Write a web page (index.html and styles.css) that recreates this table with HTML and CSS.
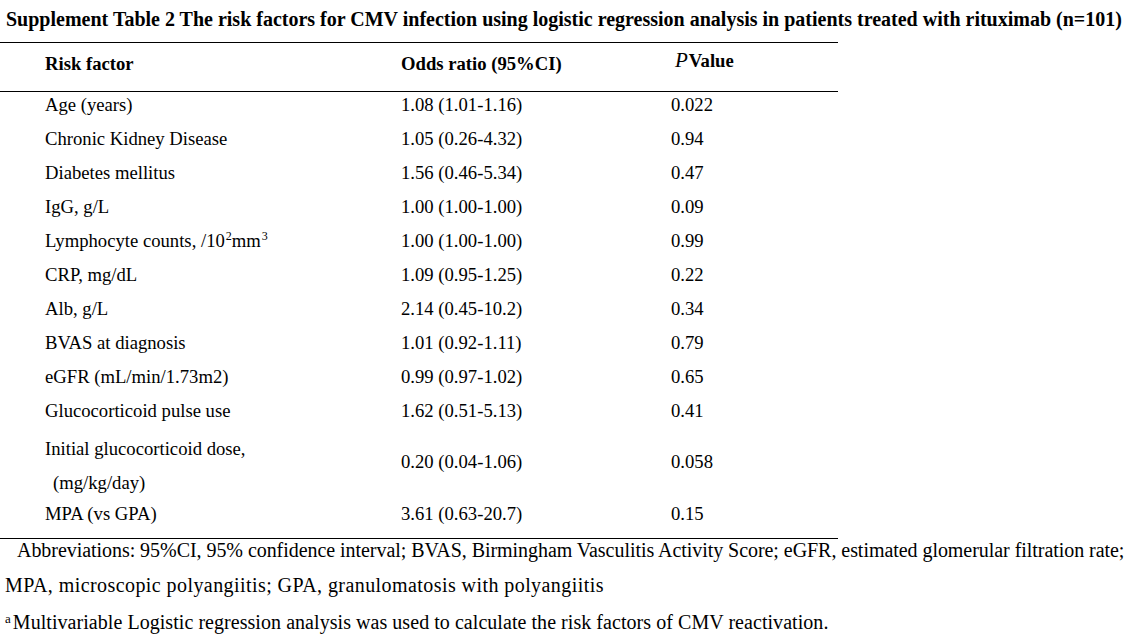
FILE: index.html
```html
<!DOCTYPE html>
<html>
<head>
<meta charset="utf-8">
<link rel="stylesheet" href="styles.css">
</head>
<body>
<h1 class="title">Supplement Table 2 The risk factors for CMV infection using logistic regression analysis in patients treated with rituximab (n=101)</h1>
<table class="tbl">
  <thead>
    <tr class="head">
      <th class="c1">Risk factor</th>
      <th class="c2">Odds ratio (95%CI)</th>
      <th class="c3"><span class="pv"><i class="p">P</i>Value</span></th>
    </tr>
  </thead>
  <tbody>
    <tr><td class="c1">Age (years)</td><td class="c2">1.08 (1.01-1.16)</td><td class="c3">0.022</td></tr>
    <tr><td class="c1">Chronic Kidney Disease</td><td class="c2">1.05 (0.26-4.32)</td><td class="c3">0.94</td></tr>
    <tr><td class="c1">Diabetes mellitus</td><td class="c2">1.56 (0.46-5.34)</td><td class="c3">0.47</td></tr>
    <tr><td class="c1">IgG, g/L</td><td class="c2">1.00 (1.00-1.00)</td><td class="c3">0.09</td></tr>
    <tr><td class="c1">Lymphocyte counts, /10<sup class="sup">2</sup>mm<sup class="sup">3</sup></td><td class="c2">1.00 (1.00-1.00)</td><td class="c3">0.99</td></tr>
    <tr><td class="c1">CRP, mg/dL</td><td class="c2">1.09 (0.95-1.25)</td><td class="c3">0.22</td></tr>
    <tr><td class="c1">Alb, g/L</td><td class="c2">2.14 (0.45-10.2)</td><td class="c3">0.34</td></tr>
    <tr><td class="c1">BVAS at diagnosis</td><td class="c2">1.01 (0.92-1.11)</td><td class="c3">0.79</td></tr>
    <tr><td class="c1">eGFR (mL/min/1.73m2)</td><td class="c2">0.99 (0.97-1.02)</td><td class="c3">0.65</td></tr>
    <tr><td class="c1">Glucocorticoid pulse use</td><td class="c2">1.62 (0.51-5.13)</td><td class="c3">0.41</td></tr>
    <tr class="double"><td class="c1">Initial glucocorticoid dose,<br><span class="indent">(mg/kg/day)</span></td><td class="c2">0.20 (0.04-1.06)</td><td class="c3">0.058</td></tr>
    <tr class="last"><td class="c1">MPA (vs GPA)</td><td class="c2">3.61 (0.63-20.7)</td><td class="c3">0.15</td></tr>
  </tbody>
</table>
<div class="notes">
  <p class="note first">Abbreviations: 95%CI, 95% confidence interval; BVAS, Birmingham Vasculitis Activity Score; eGFR, estimated glomerular filtration rate;</p>
  <p class="note second">MPA, microscopic polyangiitis; GPA, granulomatosis with polyangiitis</p>
  <p class="note third"><sup class="fn">a</sup>Multivariable Logistic regression analysis was used to calculate the risk factors of CMV reactivation.</p>
</div>
</body>
</html>
```

FILE: styles.css
```css
html, body {
  margin: 0;
  padding: 0;
  background: #ffffff;
}
body {
  font-family: "Liberation Serif", "Times New Roman", serif;
  color: #000000;
  font-size: 18.67px;
}
.title {
  margin: 0;
  padding: 7px 0 0 6px;
  height: 35px;
  box-sizing: border-box;
  font-size: 20px;
  font-weight: bold;
  line-height: 24px;
  white-space: nowrap;
}
.tbl {
  width: 838px;
  border-collapse: collapse;
  border-top: 1.5px solid #000;
  border-bottom: 1.5px solid #000;
  margin-top: 7px;
}
.tbl th, .tbl td {
  padding: 0;
  text-align: left;
  vertical-align: top;
  font-size: 18.67px;
  white-space: nowrap;
}
.head th {
  height: 49px;
  line-height: 24px;
  padding-top: 9px;
  box-sizing: border-box;
  border-bottom: 1.5px solid #000;
  font-weight: bold;
}
.c1 { width: 401px; padding-left: 45px !important; }
.c2 { width: 270px; }
.tbl td {
  height: 34px;
  line-height: 24px;
  padding-top: 1px;
  box-sizing: border-box;
}
.double td {
  height: 68px;
  line-height: 34px;
  padding-top: 0;
}
.double .c2, .double .c3 {
  vertical-align: middle;
  padding-bottom: 8px;
}
.double .c1 { line-height: 34px; padding-top: 0; }
.indent { padding-left: 8px; }
.last td { height: 39px; padding-top: 2px; }
.pv { position: relative; top: -4px; padding-left: 4px; }
.p { font-weight: normal; font-style: italic; font-size: 21px; margin-right: 1px; }
.sup { font-size: 12px; line-height: 0; vertical-align: 7px; margin-left: 1px; }
.notes { padding-top: 0; }
.note {
  margin: 0;
  font-size: 20px;
  line-height: 36px;
  height: 36px;
  padding-left: 5px;
  white-space: nowrap;
}
.note.first { padding-left: 17px; height: 28px; line-height: 22px; letter-spacing: -0.05px; }
.note.second { letter-spacing: 0.43px; height: 37px; }
.note.third { letter-spacing: 0.05px; }
.fn { font-size: 13px; line-height: 0; vertical-align: 6px; margin-right: 2px; }
```
